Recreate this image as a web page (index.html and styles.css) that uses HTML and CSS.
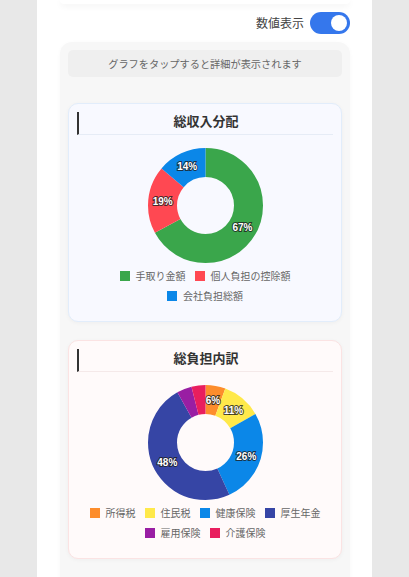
FILE: index.html
```
<!DOCTYPE html>
<html lang="ja">
<head>
<meta charset="utf-8">
<link rel="stylesheet" href="styles.css">
</head>
<body>
<div class="page">
  <div class="prev-card"></div>
  <div class="toggle-row">
    <span class="toggle-label">数値表示</span>
    <span class="toggle"><span class="knob"></span></span>
  </div>
  <div class="panel">
    <div class="hint">グラフをタップすると詳細が表示されます</div>

    <div class="card card-income">
      <div class="card-head">総収入分配</div>
      <div class="chart">
        <svg width="115" height="115" viewBox="0 0 115 115">
          <g transform="rotate(-90 57.5 57.5)" fill="none" stroke-width="29">
            <circle cx="57.5" cy="57.5" r="43" stroke="#3aa64b" stroke-dasharray="181.02 270.18" stroke-dashoffset="0"/>
            <circle cx="57.5" cy="57.5" r="43" stroke="#ff4852" stroke-dasharray="51.33 270.18" stroke-dashoffset="-181.02"/>
            <circle cx="57.5" cy="57.5" r="43" stroke="#0b87e8" stroke-dasharray="37.82 270.18" stroke-dashoffset="-232.35"/>
          </g>
          <g class="lbl">
            <text x="94.5" y="79.4">67%</text>
            <text x="14.7" y="53.4">19%</text>
            <text x="39.2" y="18.6">14%</text>
          </g>
        </svg>
      </div>
      <div class="legend">
        <div class="legend-row">
          <span class="item"><i class="box c-green"></i>手取り金額</span>
          <span class="item"><i class="box c-red"></i>個人負担の控除額</span>
        </div>
        <div class="legend-row">
          <span class="item"><i class="box c-blue"></i>会社負担総額</span>
        </div>
      </div>
    </div>

    <div class="card card-burden">
      <div class="card-head">総負担内訳</div>
      <div class="chart">
        <svg width="115" height="115" viewBox="0 0 115 115">
          <g transform="rotate(-90 57.5 57.5)" fill="none" stroke-width="29">
            <circle cx="57.5" cy="57.5" r="43" stroke="#fd8d2c" stroke-dasharray="15.13 270.18" stroke-dashoffset="0"/>
            <circle cx="57.5" cy="57.5" r="43" stroke="#ffe94a" stroke-dasharray="29.99 270.18" stroke-dashoffset="-15.13"/>
            <circle cx="57.5" cy="57.5" r="43" stroke="#0b87e8" stroke-dasharray="71.33 270.18" stroke-dashoffset="-45.12"/>
            <circle cx="57.5" cy="57.5" r="43" stroke="#3645a5" stroke-dasharray="131.31 270.18" stroke-dashoffset="-116.45"/>
            <circle cx="57.5" cy="57.5" r="43" stroke="#991ea3" stroke-dasharray="11.35 270.18" stroke-dashoffset="-247.76"/>
            <circle cx="57.5" cy="57.5" r="43" stroke="#e91e5e" stroke-dasharray="11.08 270.18" stroke-dashoffset="-259.11"/>
          </g>
          <g class="lbl">
            <text x="65" y="15.4">6%</text>
            <text x="85.4" y="25">11%</text>
            <text x="98.3" y="71">26%</text>
            <text x="19.3" y="77.3">48%</text>
          </g>
        </svg>
      </div>
      <div class="legend">
        <div class="legend-row">
          <span class="item"><i class="box c-orange"></i>所得税</span>
          <span class="item"><i class="box c-yellow"></i>住民税</span>
          <span class="item"><i class="box c-blue"></i>健康保険</span>
          <span class="item"><i class="box c-navy"></i>厚生年金</span>
        </div>
        <div class="legend-row">
          <span class="item"><i class="box c-purple"></i>雇用保険</span>
          <span class="item"><i class="box c-pink"></i>介護保険</span>
        </div>
      </div>
    </div>
  </div>
</div>
</body>
</html>
```

FILE: styles.css
```
html, body {
  margin: 0;
  padding: 0;
}
body {
  background: #e8e8e8;
  font-family: "Noto Sans CJK JP", "Noto Sans", "Liberation Sans", sans-serif;
  color: #333;
}
.page {
  width: 335px;
  margin: 0 auto;
  background: #fff;
  min-height: 100vh;
  padding: 0 22px 0 23px;
  box-sizing: border-box;
  overflow: hidden;
}
.prev-card {
  height: 4px;
  background: #fff;
  border-radius: 0 0 10px 10px;
  box-shadow: 0 2px 6px rgba(0, 0, 0, 0.06);
}
.toggle-row {
  display: flex;
  justify-content: flex-end;
  align-items: center;
  gap: 6px;
  margin-top: 8px;
  height: 22px;
}
.toggle-label {
  font-size: 12px;
  color: #444;
  line-height: 22px;
}
.toggle {
  width: 40px;
  height: 22px;
  border-radius: 11px;
  background: #3577ec;
  display: flex;
  align-items: center;
  justify-content: flex-end;
  padding: 0 3px;
  box-sizing: border-box;
}
.knob {
  width: 16px;
  height: 16px;
  border-radius: 50%;
  background: #fff;
}
.panel {
  margin-top: 8px;
  background: #f7f7f7;
  border-radius: 12px;
  padding: 8px 8px 20px;
  box-shadow: 0 1px 4px rgba(0, 0, 0, 0.03);
  display: flex;
  flex-direction: column;
}
.hint {
  background: #efefef;
  border-radius: 5px;
  height: 27px;
  line-height: 27px;
  text-align: center;
  font-size: 10.2px;
  color: #666;
  margin-bottom: 26px;
}
.card {
  border-radius: 10px;
  padding: 8px 8px 15px;
  box-shadow: 0 1px 4px rgba(0, 0, 0, 0.04);
  margin-bottom: 18px;
}
.card-income {
  background: #f8f9ff;
  border: 1px solid #e2edfb;
}
.card-burden {
  background: #fffafa;
  border: 1px solid #fbe3e3;
}
.card-head {
  border-left: 2px solid #333;
  text-align: center;
  font-weight: bold;
  font-size: 13px;
  line-height: 14px;
  padding: 2px 0 6px;
  color: #333;
}
.card-income .card-head {
  border-bottom: 1px solid #e6ecf6;
}
.card-burden .card-head {
  border-bottom: 1px solid #f5e9e9;
}
.chart {
  display: flex;
  justify-content: center;
  margin-top: 13px;
}
.chart svg {
  display: block;
}
.lbl text {
  font-family: "Liberation Sans", Arial, sans-serif;
  font-weight: bold;
  font-size: 10px;
  fill: #fff;
  stroke: rgba(30, 30, 30, 0.8);
  stroke-width: 2px;
  paint-order: stroke;
  text-anchor: middle;
  dominant-baseline: central;
}
.legend {
  margin-top: 3px;
}
.legend-row {
  display: flex;
  justify-content: center;
  gap: 9px;
  height: 20px;
  align-items: center;
}
.item {
  display: flex;
  align-items: center;
  font-size: 10px;
  color: #666;
  line-height: 20px;
}
.box {
  width: 10px;
  height: 10px;
  margin-right: 6px;
  display: block;
}
.c-green { background: #3aa64b; }
.c-red { background: #ff4852; }
.c-blue { background: #0b87e8; }
.c-orange { background: #fd8d2c; }
.c-yellow { background: #ffe94a; }
.c-navy { background: #3645a5; }
.c-purple { background: #991ea3; }
.c-pink { background: #e91e5e; }
```
